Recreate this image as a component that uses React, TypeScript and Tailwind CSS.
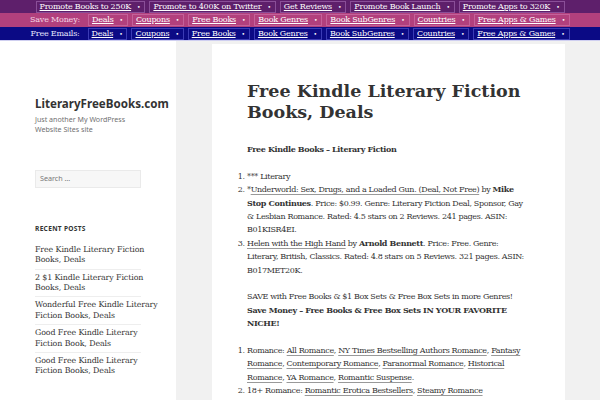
import React from 'react';

const serif = { fontFamily: '"DejaVu Serif", serif' };
const sans = { fontFamily: '"Noto Sans", sans-serif' };

const promoLinks = [
  'Promote Books to 250K',
  'Promote to 400K on Twitter',
  'Get Reviews',
  'Promote Book Launch',
  'Promote Apps to 320K',
];

const catLinks = [
  'Deals',
  'Coupons',
  'Free Books',
  'Book Genres',
  'Book SubGenres',
  'Countries',
  'Free Apps & Games',
];

// titles split the way the sidebar wraps them
const recentPosts = [
  ['Free Kindle Literary Fiction', 'Books, Deals'],
  ['2 $1 Kindle Literary Fiction', 'Books, Deals'],
  ['Wonderful Free Kindle Literary', 'Fiction Books, Deals'],
  ['Good Free Kindle Literary', 'Fiction Book, Deals'],
  ['Good Free Kindle Literary', 'Fiction Books, Deals'],
];

function BarItem({ label, border }: { label: string; border: string }) {
  return (
    <span className={`flex h-[12px] items-center gap-[6px] border pl-[3px] pr-[4px] ${border}`}>
      <a className="underline decoration-[0.5px] underline-offset-[1px]">{label}</a>
      <span className="text-[6px]">•</span>
    </span>
  );
}

function Ln({ children }: { children: React.ReactNode }) {
  return <a className="underline decoration-[#999] decoration-1 underline-offset-[2px]">{children}</a>;
}

export default function App() {
  return (
    <div className="h-[400px] w-[600px] overflow-hidden bg-white text-[#333]" style={serif}>
      {/* Top bars */}
      <div className="text-[8px] leading-none tracking-[-0.2px] text-white">
        <div className="flex h-[13px] items-center justify-center gap-[4px] bg-[#5e1f6b]">
          {promoLinks.map((l) => (
            <BarItem key={l} label={l} border="border-[#8a4f98]" />
          ))}
        </div>
        <div className="flex h-[14px] items-center justify-center gap-[4px] bg-[#b2407d]">
          <span className="mr-[4px] text-[#f3d6e6]">Save Money:</span>
          {catLinks.map((l) => (
            <BarItem key={l} label={l} border="border-[#c4619a]" />
          ))}
        </div>
        <div className="flex h-[13px] items-center justify-center gap-[4px] bg-[#0b0a85]">
          <span className="mr-[4px] text-[#e8e8ff]">Free Emails:</span>
          {catLinks.map((l) => (
            <BarItem key={l} label={l} border="border-[#3b3bb5]" />
          ))}
        </div>
        <div className="h-[1px] bg-[#cfcff0]" />
      </div>

      <div className="flex h-full">
        {/* Sidebar */}
        <aside className="w-[176px] shrink-0 bg-white px-[35px] pt-[55px]">
          <div className="text-[11.6px] font-bold leading-[16px] text-[#333]" style={sans}>
            LiteraryFreeBooks.com
          </div>
          <div className="mt-[2px] text-[7.1px] leading-[10.4px] text-[#707070]" style={sans}>
            Just another My WordPress
            <br />
            Website Sites site
          </div>
          <div
            className="mt-[35px] flex h-[18px] w-[106px] items-center border border-[#eaeaea] bg-[#f7f7f7] px-[4px] text-[7.2px] text-[#777]"
            style={sans}
          >
            Search …
          </div>
          <div className="mt-[36px] text-[6.6px] font-bold tracking-[0.3px] text-[#333]" style={sans}>
            RECENT POSTS
          </div>
          <ul className="mt-[8px] w-[106px] text-[7.9px] leading-[10.4px] tracking-[-0.1px] text-[#333]">
            {recentPosts.map(([a, b], i) => (
              <li
                key={i}
                className={`whitespace-nowrap py-[3px] ${i < recentPosts.length - 1 ? 'border-b border-[#eee]' : ''}`}
              >
                {a}
                <br />
                {b}
              </li>
            ))}
          </ul>
        </aside>

        {/* Main */}
        <main className="flex-1 bg-[#f1f1f1] pl-[36px] pr-[35px] pt-[3px]">
          <article className="h-full bg-white px-[35px] pt-[37px]">
            <h1 className="text-[17.5px] font-bold leading-[21px] text-[#333]">
              Free Kindle Literary Fiction Books, Deals
            </h1>
            <div className="mt-[20px] text-[8px] leading-[13.4px] tracking-[-0.35px]">
              <p className="font-bold">Free Kindle Books – Literary Fiction</p>
              <ol className="mt-[13.4px] list-decimal pl-0">
                <li>*** Literary</li>
                <li>
                  *<Ln>Underworld: Sex, Drugs, and a Loaded Gun. (Deal, Not Free)</Ln> by{' '}
                  <b>Mike Stop Continues</b>. Price: $0.99. Genre: Literary Fiction Deal, Sponsor, Gay
                  &amp;{'\u00a0'}Lesbian Romance. Rated: 4.5 stars on 2 Reviews. 241 pages. ASIN:
                  B01KISR4EI.
                </li>
                <li>
                  <Ln>Helen with the High Hand</Ln> by <b>Arnold Bennett</b>. Price: Free. Genre:
                  Literary, British, Classics. Rated: 4.8 stars on 5 Reviews. 321 pages. ASIN:
                  B017MET20K.
                </li>
              </ol>
              <p className="mt-[13.4px]">
                SAVE with Free Books &amp; $1 Box Sets &amp; Free Box Sets in more Genres!
                <br />
                <b>Save Money – Free Books &amp; Free Box Sets IN YOUR FAVORITE NICHE!</b>
              </p>
              <ol className="mt-[13.4px] list-decimal pl-0">
                <li>
                  Romance: <Ln>All Romance</Ln>, <Ln>NY Times Bestselling Authors Romance</Ln>,{' '}
                  <Ln>Fantasy Romance</Ln>, <Ln>Contemporary Romance</Ln>,{' '}
                  <Ln>Paranormal Romance</Ln>, <Ln>Historical Romance</Ln>, <Ln>YA Romance</Ln>,{' '}
                  <Ln>Romantic Suspense</Ln>.
                </li>
                <li>
                  18+ Romance: <Ln>Romantic Erotica Bestsellers</Ln>, <Ln>Steamy Romance</Ln>
                </li>
              </ol>
            </div>
          </article>
        </main>
      </div>
    </div>
  );
}
